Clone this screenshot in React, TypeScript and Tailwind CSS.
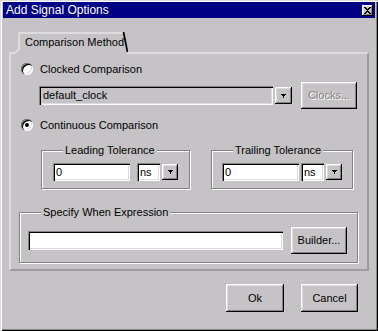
import React from 'react';

const RAISED =
  'shadow-[inset_-1px_-1px_0_#000,inset_1px_1px_0_#fff,inset_-2px_-2px_0_#848284,inset_2px_2px_0_#dedbde]';
const SUNKEN =
  'shadow-[inset_1px_1px_0_#848284,inset_2px_2px_0_#000,inset_-1px_-1px_0_#fff,inset_-2px_-2px_0_#dedbde]';
const ETCHED = 'border border-[#848284] shadow-[inset_1px_1px_0_#fff,1px_1px_0_#fff]';

const CLOSE_X = ['XX...XX', '.XX.XX.', '..XXX..', '...X...', '..XXX..', '.XX.XX.', 'XX...XX'];
const ARROW = ['XXXXX', '.XXX.', '..X..', '..X..'];

function Pixels({ rows }: { rows: string[] }) {
  return (
    <svg width={rows[0].length} height={rows.length} shapeRendering="crispEdges">
      {rows.map((r, y) =>
        r.split('').map((c, x) => (c === 'X' ? <rect key={`${x}-${y}`} x={x} y={y} width={1} height={1} fill="#000" /> : null))
      )}
    </svg>
  );
}

function Radio({ checked, label }: { checked?: boolean; label: string }) {
  return (
    <div className="flex items-center h-[12px] ml-[10px]">
      <div className={`w-[12px] h-[12px] rounded-full bg-white flex items-center justify-center ${SUNKEN}`}>
        {checked && <div className="w-[4px] h-[4px] rounded-full bg-black" />}
      </div>
      <span className="ml-[7px]">{label}</span>
    </div>
  );
}

function DropButton({ size }: { size: string }) {
  return (
    <div className={`${size} bg-[#c6c3c6] flex items-center justify-center ${RAISED}`}>
      <Pixels rows={ARROW} />
    </div>
  );
}

function Group({ label, className, children }: { label: string; className: string; children: React.ReactNode }) {
  return (
    <div className={`relative ${ETCHED} ${className}`}>
      <span className="absolute -top-[7px] left-[21px] px-[2px] bg-[#c6c3c6] leading-[13px]">{label}</span>
      {children}
    </div>
  );
}

function Tolerance({ label, className, pad, gap }: { label: string; className: string; pad: string; gap: string }) {
  return (
    <Group label={label} className={`h-[39px] ${className}`}>
      <div className={`flex items-center pt-[12px] ${pad}`}>
        <div className={`w-[77px] h-[18px] bg-white pl-[3px] flex items-center ${SUNKEN}`}>0</div>
        <div className={`w-[23px] h-[18px] bg-white pl-[3px] flex items-center ${gap} ${SUNKEN}`}>ns</div>
        <div className="ml-[2px]">
          <DropButton size="w-[16px] h-[16px]" />
        </div>
      </div>
    </Group>
  );
}

export default function App() {
  return (
    <div
      className="w-[378px] h-[331px] bg-[#c6c3c6] text-black text-[11px] leading-[13px] shadow-[inset_1px_1px_0_#dedbde,inset_2px_2px_0_#fff,inset_-1px_-1px_0_#000,inset_-2px_-2px_0_#848284] pt-[2px]"
      style={{ fontFamily: '"Liberation Sans", Arial, sans-serif' }}
    >
      {/* title bar */}
      <div className="mx-[3px] h-[16px] bg-[#000084] flex items-center justify-between pl-[3px] pr-[2px]">
        <span className="text-white text-[12px]">Add Signal Options</span>
        <div className={`w-[11px] h-[11px] bg-[#c6c3c6] flex items-center justify-center ${RAISED}`}>
          <Pixels rows={CLOSE_X} />
        </div>
      </div>

      {/* tab */}
      <div className="relative z-10 ml-[15px] mt-[14px] -mb-[2px] w-[113px] h-[22px]">
        <svg className="absolute inset-0" width="113" height="22">
          <polygon points="4,0 108,0 112,20 112,22 0,22 0,20 4,16" fill="#c6c3c6" />
          <polyline points="0,21 4,17 4,1 108,1" fill="none" stroke="#dedbde" strokeWidth="2" />
          <line x1="108.5" y1="0" x2="112.5" y2="20" stroke="#000" strokeWidth="1.8" />
        </svg>
        <div className="relative pl-[10px] pt-[4px]">Comparison Method</div>
      </div>

      {/* panel */}
      <div className="mx-[9px] h-[219px] border-2 border-t-[#dedbde] border-l-[#dedbde] border-r-[#9c9a9c] border-b-[#9c9a9c]">
        <div className="mt-[9px]">
          <Radio label="Clocked Comparison" />
        </div>

        <div className="flex items-center ml-[28px] mt-[7px] h-[27px]">
          <div className={`w-[234px] h-[19px] pl-[4px] flex items-center ${SUNKEN}`}>default_clock</div>
          <div className="ml-[2px]">
            <DropButton size="w-[17px] h-[17px]" />
          </div>
          <div
            className={`ml-[9px] w-[56px] h-[27px] flex items-center justify-center text-[#848284] [text-shadow:1px_1px_0_#fff] ${RAISED}`}
          >
            Clocks...
          </div>
        </div>

        <div className="mt-[10px]">
          <Radio checked label="Continuous Comparison" />
        </div>

        <div className="flex mt-[19px] ml-[30px]">
          <Tolerance label="Leading Tolerance" className="w-[149px]" pad="pl-[11px]" gap="ml-[7px]" />
          <Tolerance label="Trailing Tolerance" className="w-[142px] ml-[21px]" pad="pl-[10px]" gap="ml-[2px]" />
        </div>

        <Group label="Specify When Expression" className="ml-[8px] mt-[23px] w-[339px] h-[51px]">
          <div className="flex items-center pl-[8px] pt-[14px]">
            <div className={`w-[255px] h-[19px] bg-white ${SUNKEN}`} />
            <div className={`ml-[8px] w-[56px] h-[27px] flex items-center justify-center ${RAISED}`}>Builder...</div>
          </div>
        </Group>
      </div>

      {/* dialog buttons */}
      <div className="flex justify-end pr-[20px] mt-[13px]">
        <div className={`w-[58px] h-[28px] flex items-center justify-center ${RAISED}`}>Ok</div>
        <div className={`ml-[17px] w-[57px] h-[28px] flex items-center justify-center ${RAISED}`}>Cancel</div>
      </div>
    </div>
  );
}
